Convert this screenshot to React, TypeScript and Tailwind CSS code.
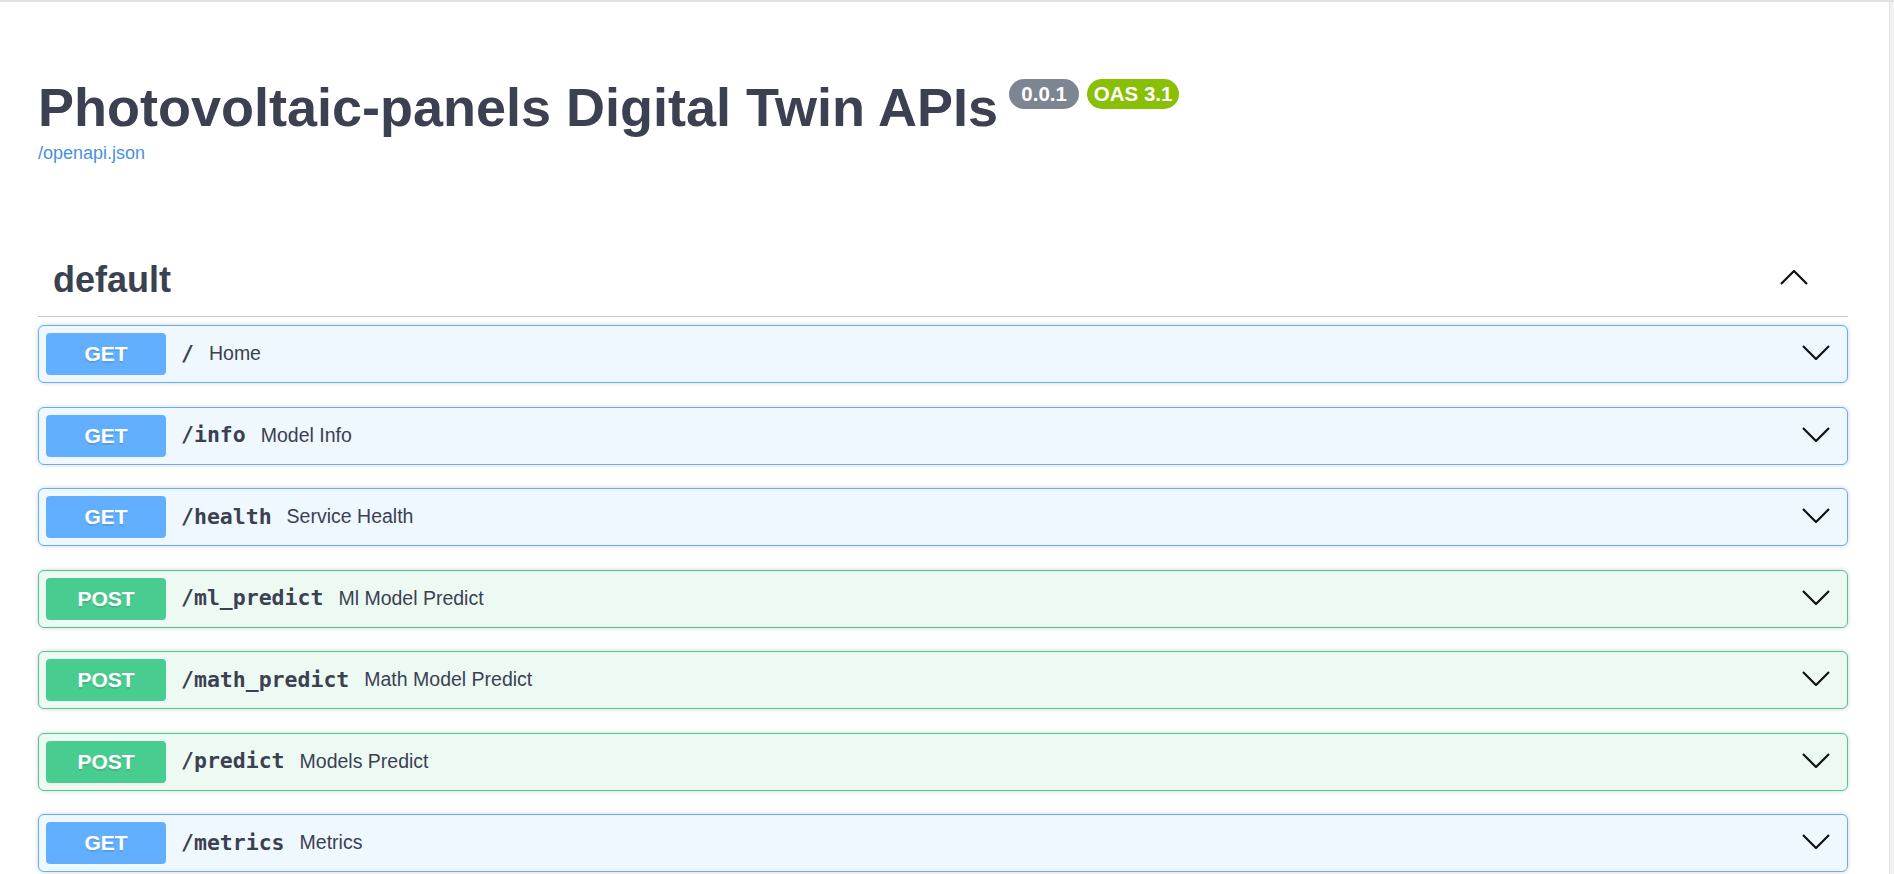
const endpoints = [
  { method: "GET", path: "/", summary: "Home" },
  { method: "GET", path: "/info", summary: "Model Info" },
  { method: "GET", path: "/health", summary: "Service Health" },
  { method: "POST", path: "/ml_predict", summary: "Ml Model Predict" },
  { method: "POST", path: "/math_predict", summary: "Math Model Predict" },
  { method: "POST", path: "/predict", summary: "Models Predict" },
  { method: "GET", path: "/metrics", summary: "Metrics" },
]

const Chevron: React.FC<{ up?: boolean; className?: string }> = ({ up, className }) => (
  <svg width="28" height="15" viewBox="0 0 28 15" className={className}>
    <polyline
      points={up ? "1,14 14,1 27,14" : "1,1 14,14 27,1"}
      fill="none"
      stroke="#111"
      strokeWidth="2.2"
    />
  </svg>
)

const OpBlock: React.FC<{ method: string; path: string; summary: string }> = ({ method, path, summary }) => {
  const isGet = method === "GET"
  return (
    <div
      className={`flex items-center h-[58px] p-[7px] mb-[23.5px] border rounded-[6px] shadow-[0_0_4px_rgba(0,0,0,0.19)] ${
        isGet ? "bg-[#eff7ff] border-[#61affe]" : "bg-[#edfaf4] border-[#49cc90]"
      }`}
    >
      {/* Method badge */}
      <div
        className={`w-[120px] h-[42px] flex items-center justify-center rounded-[4px] text-white font-bold text-[21px] [text-shadow:0_1.5px_0_rgba(0,0,0,0.1)] ${
          isGet ? "bg-[#61affe]" : "bg-[#49cc90]"
        }`}
      >
        {method}
      </div>
      <span className="ml-[15px] font-['DejaVu_Sans_Mono',monospace] font-bold text-[21.5px] text-[#3b4151]">
        {path}
      </span>
      <span className="ml-[15px] text-[19.5px] text-[#3b4151]">{summary}</span>
      <Chevron className="ml-auto mr-[10px] mb-[3px]" />
    </div>
  )
}

const App: React.FC = () => {
  return (
    <div className="w-[1894px] h-[874px] overflow-hidden bg-white font-['Liberation_Sans',Arial,sans-serif] flex flex-col">
      {/* Top strip */}
      <div className="h-[2px] bg-[#e1e1e1] shrink-0" />

      <div className="flex flex-1">
        {/* Main */}
        <div className="flex-1 pl-[38px] pr-[41px] pt-[74px]">
          {/* Info */}
          <div className="flex items-start">
            <h2 className="text-[54px] leading-[62px] font-bold text-[#3b4151]">
              Photovoltaic-panels Digital Twin APIs
            </h2>
            <div className="flex gap-[8px] ml-[11px] mt-[3px]">
              <span className="w-[70px] h-[30px] rounded-full bg-[#7d8492] text-white font-bold text-[20.5px] leading-[30px] text-center">
                0.0.1
              </span>
              <span className="w-[92px] h-[30px] rounded-full bg-[#89bf04] text-white font-bold text-[20.5px] leading-[30px] text-center">
                OAS 3.1
              </span>
            </div>
          </div>
          <a className="block mt-[5px] text-[18px] leading-[21px] text-[#4990e2]">/openapi.json</a>

          {/* Tag */}
          <div className="mt-[79.5px] flex items-center justify-between pl-[15px] pr-[40px] py-[15px] border-b border-[#c4c6cb] mb-[8.5px]">
            <h3 className="text-[36px] leading-[42px] font-bold text-[#3b4151]">default</h3>
            <Chevron up className="mb-[5px]" />
          </div>

          {endpoints.map((e) => (
            <OpBlock key={e.path} {...e} />
          ))}
        </div>

        {/* Scrollbar track */}
        <div className="w-[5px] bg-[#f1f1f1] border-l border-[#e3e3e3]" />
      </div>
    </div>
  )
}

export default App
